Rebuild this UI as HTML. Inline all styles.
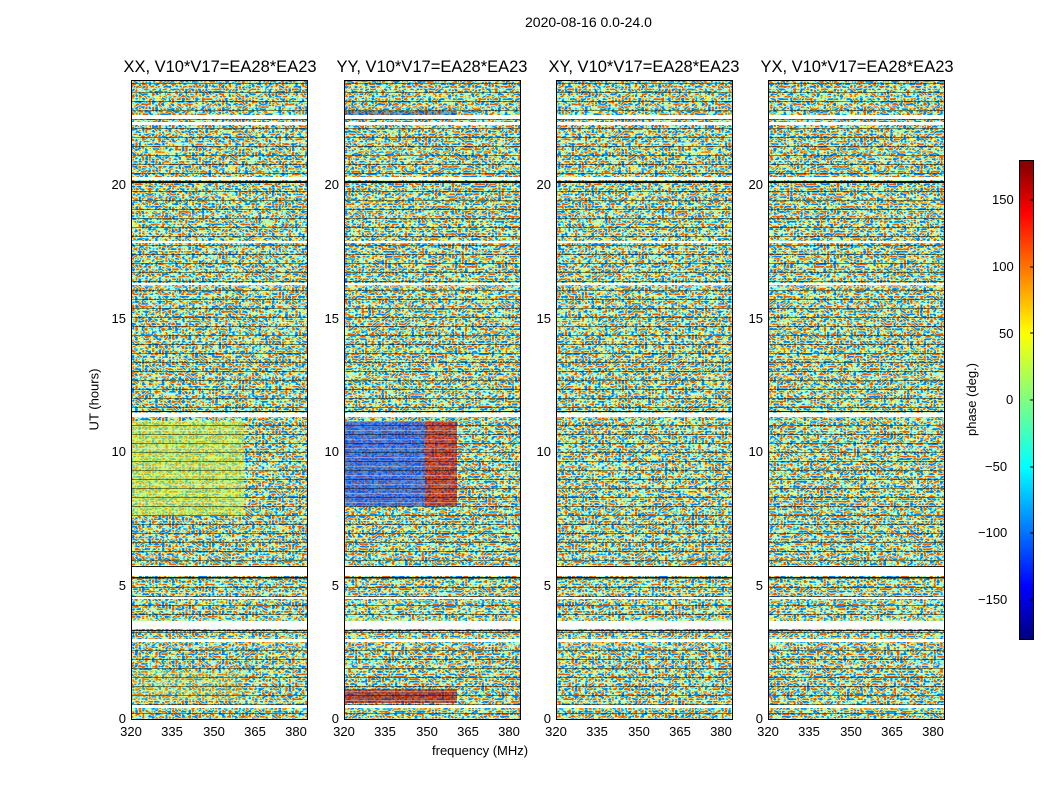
<!DOCTYPE html>
<html><head><meta charset="utf-8"><style>
body{margin:0;background:#fff;width:1050px;height:800px;position:relative;overflow:hidden;font-family:"Liberation Sans","DejaVu Sans",sans-serif;color:#000}
.t{position:absolute;font-size:13px;white-space:nowrap}
.pt{position:absolute;font-size:16.5px;white-space:nowrap;transform:translateX(-50%)}
.p{position:absolute;top:80px;width:177px;height:640px;border:1px solid #000;box-sizing:border-box;overflow:hidden}
.p svg{position:absolute;left:0;top:0}
.yl{position:absolute;font-size:13px;text-align:right;width:30px}
.xl{position:absolute;font-size:13px;transform:translateX(-50%)}
</style></head><body>
<svg width="0" height="0" style="position:absolute">
<defs>
<filter id="jet" x="0" y="0" width="100%" height="100%">
<feTurbulence type="fractalNoise" baseFrequency="0.3 0.4" numOctaves="1" seed="3"/>
<feColorMatrix type="matrix" values="4 0 0 0 -1.5  4 0 0 0 -1.5  4 0 0 0 -1.5  0 0 0 0 1"/>
<feComponentTransfer>
<feFuncR type="table" tableValues="0 0 0.2 0.5 1 1 0.8"/>
<feFuncG type="table" tableValues="0.2 0.5 1 1 1 0.4 0.1"/>
<feFuncB type="table" tableValues="0.9 1 1 0.5 0.1 0 0"/>
</feComponentTransfer>
</filter>
<filter id="jet2" x="0" y="0" width="100%" height="100%">
<feTurbulence type="fractalNoise" baseFrequency="0.3 0.4" numOctaves="1" seed="11"/>
<feColorMatrix type="matrix" values="4 0 0 0 -1.5  4 0 0 0 -1.5  4 0 0 0 -1.5  0 0 0 0 1"/>
<feComponentTransfer>
<feFuncR type="table" tableValues="0 0 0.2 0.5 1 1 0.8"/>
<feFuncG type="table" tableValues="0.2 0.5 1 1 1 0.4 0.1"/>
<feFuncB type="table" tableValues="0.9 1 1 0.5 0.1 0 0"/>
</feComponentTransfer>
</filter>
<linearGradient id="cb" x1="0" y1="1" x2="0" y2="0">
<stop offset="0" stop-color="#00007f"/><stop offset="0.11" stop-color="#0000ff"/><stop offset="0.36" stop-color="#00ffff"/><stop offset="0.5" stop-color="#7fff7f"/><stop offset="0.64" stop-color="#ffff00"/><stop offset="0.89" stop-color="#ff0000"/><stop offset="1" stop-color="#7f0000"/>
</linearGradient>
<pattern id="lines" width="177" height="9" patternUnits="userSpaceOnUse" x="0" y="2">
<rect y="0" width="177" height="1" fill="#000" opacity="0.45"/>
<rect y="5" width="177" height="1" fill="#fff" opacity="0.3"/>
</pattern>
<g id="gaps">
<rect width="177" height="640" fill="url(#lines)"/>
<g fill="#fff">
<rect y="34" width="177" height="4"/>
<rect y="41" width="177" height="3"/>
<rect y="96" width="177" height="3"/>
<rect y="332" width="177" height="4"/>
<rect y="486" width="177" height="9"/>
<rect y="516" width="177" height="2"/>
<rect y="540" width="177" height="8"/>
<rect y="558" width="177" height="3"/>
<rect y="624" width="177" height="3"/>
<rect y="160" width="177" height="2"/>
<rect y="202" width="177" height="2"/>
</g>
<g fill="#000" opacity="0.85">
<rect y="100" width="177" height="2"/>
<rect y="330" width="177" height="1"/>
<rect y="485" width="177" height="1"/>
<rect y="496" width="177" height="1"/>
<rect y="549" width="177" height="1"/>
</g>
</g>
</defs></svg>

<div class="t" style="left:525px;top:14px;font-size:14px">2020-08-16 0.0-24.0</div>

<div class="pt" style="left:220px;top:58px">XX, V10*V17=EA28*EA23</div>
<div class="pt" style="left:432px;top:58px">YY, V10*V17=EA28*EA23</div>
<div class="pt" style="left:644px;top:58px">XY, V10*V17=EA28*EA23</div>
<div class="pt" style="left:857px;top:58px">YX, V10*V17=EA28*EA23</div>

<div class="p" style="left:131px">
<svg width="177" height="640"><rect width="177" height="640" filter="url(#jet)"/>
<rect x="0" y="340" width="112" height="95" fill="#d0f040" opacity="0.55"/>
<rect x="0" y="590" width="112" height="30" fill="#e8e040" opacity="0.25"/>
<use href="#gaps"/></svg>
</div>
<div class="p" style="left:344px">
<svg width="177" height="640"><rect width="177" height="640" filter="url(#jet2)"/>
<rect x="0" y="340" width="80" height="85" fill="#1040f0" opacity="0.6"/>
<rect x="80" y="340" width="32" height="85" fill="#c00000" opacity="0.6"/>
<rect x="0" y="608" width="112" height="14" fill="#a00000" opacity="0.6"/>
<rect x="0" y="30" width="112" height="8" fill="#102090" opacity="0.4"/>
<use href="#gaps"/></svg>
</div>
<div class="p" style="left:556px">
<svg width="177" height="640"><rect width="177" height="640" filter="url(#jet)" transform="translate(177,0) scale(-1,1)"/><use href="#gaps"/></svg>
</div>
<div class="p" style="left:768px">
<svg width="177" height="640"><rect width="177" height="640" filter="url(#jet2)" transform="translate(177,0) scale(-1,1)"/><use href="#gaps"/></svg>
</div>

<svg style="position:absolute;left:0;top:0" width="1050" height="800">
<rect x="1019.5" y="160.5" width="14" height="479" fill="url(#cb)" stroke="#000"/>
<g stroke="#000">
<line x1="1030" x2="1034" y1="200" y2="200"/><line x1="1030" x2="1034" y1="267" y2="267"/><line x1="1030" x2="1034" y1="333" y2="333"/><line x1="1030" x2="1034" y1="400" y2="400"/><line x1="1030" x2="1034" y1="467" y2="467"/><line x1="1030" x2="1034" y1="533" y2="533"/><line x1="1030" x2="1034" y1="600" y2="600"/>
</g>
</svg>

<div class="yl" style="left:96px;top:711px">0</div><div class="yl" style="left:96px;top:578px">5</div><div class="yl" style="left:96px;top:444px">10</div><div class="yl" style="left:96px;top:311px">15</div><div class="yl" style="left:96px;top:177px">20</div>
<div class="yl" style="left:309px;top:711px">0</div><div class="yl" style="left:309px;top:578px">5</div><div class="yl" style="left:309px;top:444px">10</div><div class="yl" style="left:309px;top:311px">15</div><div class="yl" style="left:309px;top:177px">20</div>
<div class="yl" style="left:521px;top:711px">0</div><div class="yl" style="left:521px;top:578px">5</div><div class="yl" style="left:521px;top:444px">10</div><div class="yl" style="left:521px;top:311px">15</div><div class="yl" style="left:521px;top:177px">20</div>
<div class="yl" style="left:733px;top:711px">0</div><div class="yl" style="left:733px;top:578px">5</div><div class="yl" style="left:733px;top:444px">10</div><div class="yl" style="left:733px;top:311px">15</div><div class="yl" style="left:733px;top:177px">20</div>

<div class="xl" style="left:131px;top:724px">320</div><div class="xl" style="left:172px;top:724px">335</div><div class="xl" style="left:214px;top:724px">350</div><div class="xl" style="left:255px;top:724px">365</div><div class="xl" style="left:296px;top:724px">380</div>
<div class="xl" style="left:344px;top:724px">320</div><div class="xl" style="left:385px;top:724px">335</div><div class="xl" style="left:427px;top:724px">350</div><div class="xl" style="left:468px;top:724px">365</div><div class="xl" style="left:509px;top:724px">380</div>
<div class="xl" style="left:556px;top:724px">320</div><div class="xl" style="left:597px;top:724px">335</div><div class="xl" style="left:639px;top:724px">350</div><div class="xl" style="left:680px;top:724px">365</div><div class="xl" style="left:721px;top:724px">380</div>
<div class="xl" style="left:768px;top:724px">320</div><div class="xl" style="left:809px;top:724px">335</div><div class="xl" style="left:851px;top:724px">350</div><div class="xl" style="left:892px;top:724px">365</div><div class="xl" style="left:933px;top:724px">380</div>

<div class="t" style="left:432px;top:743px">frequency (MHz)</div>
<div class="t" style="left:63px;top:392px;transform:rotate(-90deg)">UT (hours)</div>
<div class="t" style="left:935px;top:392px;transform:rotate(-90deg)">phase (deg.)</div>

<div class="t" style="left:992px;top:192px">150</div>
<div class="t" style="left:992px;top:259px">100</div>
<div class="t" style="left:999px;top:326px">50</div>
<div class="t" style="left:1006px;top:392px">0</div>
<div class="t" style="left:985px;top:459px">−50</div>
<div class="t" style="left:978px;top:525px">−100</div>
<div class="t" style="left:978px;top:592px">−150</div>
</body></html>
